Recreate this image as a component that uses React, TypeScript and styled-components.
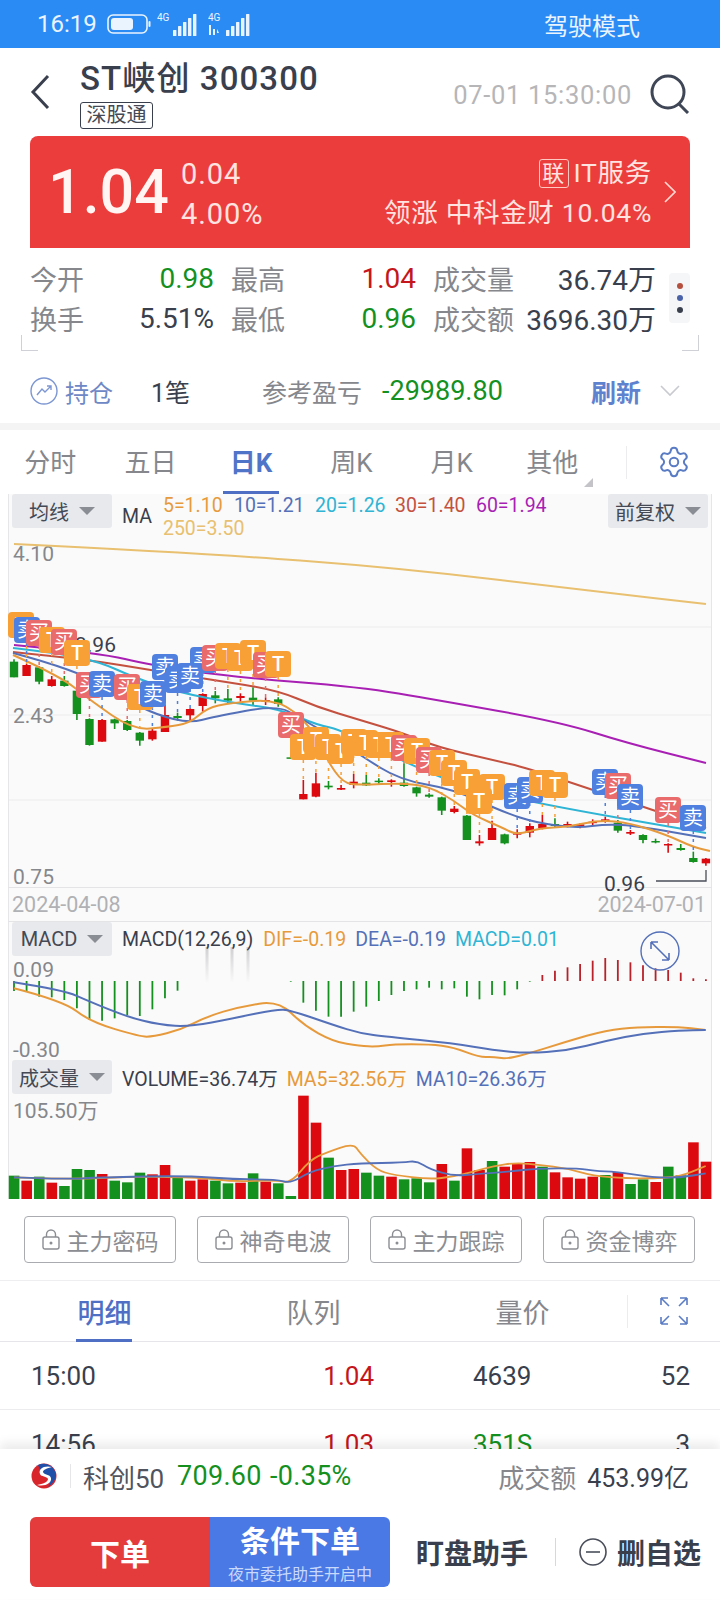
import React from "react"
import styled, { createGlobalStyle } from "styled-components"
import { Settings } from "lucide-react"

const GlobalStyle = createGlobalStyle`
  html, body {
    margin: 0;
    padding: 0;
    background: #fff;
  }
  body {
    font-family: Roboto, "Noto Sans CJK SC", sans-serif;
  }
  * { box-sizing: border-box; }
`

const GREEN = "#14901f"
const RED = "#dc0a0f"
const ORANGE = "#e79a3c"
const BLUE = "#5470b8"
const CYAN = "#2eb4d4"
const BROWN = "#c4513f"
const PURPLE = "#a81fb4"
const GOLD = "#e8c070"

const Page = styled.div`
  width: 720px;
  height: 1600px;
  overflow: hidden;
  position: relative;
  background: #fff;
`

/* status bar */
const StatusBar = styled.div`
  height: 48px;
  background: #2a8bf5;
  color: #eaf4ff;
  display: flex;
  align-items: center;
  gap: 6px;
  padding: 0 80px 0 37px;
  font-size: 24px;
`
const StatusTime = styled.span`
  width: 64px;
`
const DriveMode = styled.span`
  margin-left: auto;
  font-size: 24px;
`

/* header */
const Header = styled.div`
  height: 88px;
  display: flex;
  align-items: center;
  padding: 0 30px;
`
const TitleCol = styled.div`
  margin-left: 30px;
  display: flex;
  flex-direction: column;
  align-items: flex-start;
  margin-top: 6px;
`
const Title = styled.div`
  font-size: 33px;
  font-weight: 500;
  line-height: 34px;
  letter-spacing: 1.1px;
  color: #3a3f4d;
`
const MarketTag = styled.div`
  margin-top: 6px;
  width: 73px;
  height: 27px;
  border: 1px solid #3a3f4d;
  border-radius: 3px;
  font-size: 20px;
  line-height: 25px;
  text-align: center;
  color: #444955;
`
const QuoteTime = styled.div`
  margin-left: auto;
  font-size: 25.5px;
  letter-spacing: 0.7px;
  color: #b6b6b8;
  margin-top: 5px;
`
const SearchBtn = styled.svg`
  margin-left: 18px;
  margin-top: 4px;
`

/* red price card */
const PriceCard = styled.div`
  margin: 0 30px;
  height: 112px;
  background: #ec3d3d;
  border-radius: 8px 8px 0 0;
  display: flex;
  align-items: center;
  padding: 0 14px 0 18px;
  color: #ffe3e0;
`
const BigPrice = styled.div`
  font-size: 61px;
  font-weight: 500;
  color: #fff5f2;
  width: 133px;
`
const ChangeCol = styled.div`
  font-size: 29px;
  line-height: 40px;
  letter-spacing: 0.9px;
  padding-top: 3px;
`
const SectorCol = styled.div`
  margin-left: auto;
  display: flex;
  flex-direction: column;
  align-items: flex-end;
  font-size: 26.5px;
  line-height: 40px;
  letter-spacing: 0.7px;
  padding-top: 2px;
`
const SectorTop = styled.div`
  display: flex;
  align-items: center;
  gap: 5px;
`
const LinkBadge = styled.span`
  width: 30px;
  height: 29px;
  border: 1px solid #ffc8c0;
  border-radius: 3px;
  font-size: 22px;
  line-height: 27px;
  text-align: center;
`
const CardArrow = styled.svg`
  margin-left: 12px;
`

/* stats */
const Stats = styled.div`
  position: relative;
  height: 105px;
  padding: 10px 0 0 30px;
  display: grid;
  grid-template-columns: 184px 185px 223px;
  grid-auto-rows: 40px;
  column-gap: 17px;
`
const StatCell = styled.div`
  display: flex;
  justify-content: space-between;
  align-items: center;
  font-size: 28px;
`
const StatLabel = styled.span`
  color: #85878c;
  font-size: 27px;
`
const StatValue = styled.span<{ $color?: string }>`
  color: ${p => p.$color || "#3a3f4d"};
`
const DotsChip = styled.div`
  position: absolute;
  right: 30px;
  top: 25px;
  width: 21px;
  height: 50px;
  background: #f5f6f8;
  border-radius: 4px;
  display: flex;
  flex-direction: column;
  align-items: center;
  justify-content: center;
  gap: 6px;
`
const Dot = styled.i<{ $color: string }>`
  width: 6px;
  height: 6px;
  border-radius: 50%;
  background: ${p => p.$color};
`
const Corner = styled.div<{ $right?: boolean }>`
  position: absolute;
  bottom: 2px;
  ${p => (p.$right ? "right: 21px;" : "left: 21px;")}
  width: 17px;
  height: 16px;
  border-bottom: 1px solid #cfd1d6;
  ${p => (p.$right ? "border-right" : "border-left")}: 1px solid #cfd1d6;
`

/* holdings row */
const HoldRow = styled.div`
  height: 70px;
  padding: 6px 40px 0 30px;
  display: flex;
  align-items: center;
`
const HoldLabel = styled.span`
  margin-left: 7px;
  width: 86px;
  font-size: 24px;
  color: #6e88c6;
`
const HoldCount = styled.span`
  width: 111px;
  font-size: 25px;
  color: #3a3f4d;
`
const RefLabel = styled.span`
  width: 120px;
  font-size: 25px;
  color: #85878c;
`
const RefValue = styled.span`
  font-size: 27px;
  color: ${GREEN};
`
const RefreshBtn = styled.span`
  margin-left: auto;
  font-size: 25px;
  font-weight: 700;
  color: #5f82cf;
`
const HoldArrow = styled.svg`
  margin-left: 19px;
`

const Band = styled.div`
  height: 7px;
  background: #f4f4f5;
`

/* period tabs */
const PeriodTabs = styled.div`
  height: 64px;
  display: flex;
  align-items: stretch;
`
const PeriodTab = styled.div<{ $active?: boolean }>`
  width: 100.4px;
  position: relative;
  display: flex;
  align-items: center;
  justify-content: center;
  padding-bottom: 4px;
  font-size: 26px;
  font-weight: ${p => (p.$active ? 700 : 400)};
  color: ${p => (p.$active ? "#4f74c8" : "#85878c")};
  ${p =>
    p.$active &&
    `&::after {
      content: "";
      position: absolute;
      bottom: 0;
      left: 22px;
      width: 56px;
      height: 3px;
      background: #4f6fc4;
    }`}
`
const MoreMark = styled.i`
  position: absolute;
  left: 82px;
  top: 48px;
  width: 0;
  height: 0;
  border-left: 9px solid transparent;
  border-bottom: 9px solid #c4c4c8;
`
const TabDivider = styled.div<{ $left?: number }>`
  width: 1px;
  height: 33px;
  align-self: center;
  background: #ececee;
  margin-left: ${p => p.$left ?? 0}px;
`
const TabIcon = styled.div`
  flex: 1;
  display: flex;
  align-items: center;
  justify-content: center;
  color: #5a7cc4;
`

/* chart panels */
const Panel = styled.div<{ $h: number; $top?: boolean }>`
  position: relative;
  z-index: ${p => (p.$top ? 1 : 0)};
  margin: 0 8px;
  height: ${p => p.$h}px;
  background: #fafafa;
  box-shadow: inset 1px 0 #e6e6e8, inset -1px 0 #e6e6e8;
`
const PanelSvg = styled.svg`
  position: absolute;
  left: 0;
  top: 0;
  display: block;
  overflow: visible;
`
const Legend = styled.div`
  position: relative;
  display: flex;
  align-items: center;
  padding-left: 4px;
  font-size: 19.5px;
  height: 34px;
`
const Chip = styled.div`
  width: 100px;
  height: 34px;
  background: #e8e9ec;
  border-radius: 3px;
  display: flex;
  align-items: center;
  justify-content: center;
  gap: 10px;
  font-size: 20px;
  color: #444955;
  flex: none;
`
const ChipArrow = styled.i`
  width: 0;
  height: 0;
  border-left: 8px solid transparent;
  border-right: 8px solid transparent;
  border-top: 8px solid #8b8d94;
`
const LegendText = styled.span<{ $color?: string; $left?: number }>`
  color: ${p => p.$color || "#3a3f4d"};
  margin-left: ${p => p.$left ?? 10}px;
  white-space: nowrap;
`
const MaLabel = styled(LegendText)`
  align-self: flex-end;
  line-height: 22px;
`
const MaLegend = styled.div`
  display: grid;
  grid-template-columns: 71px 81px 80px 81px 80px;
  margin-left: 11px;
  font-size: 19.5px;
  line-height: 23px;
  align-self: flex-start;
`
const MaValue = styled.span<{ $color: string }>`
  color: ${p => p.$color};
  white-space: nowrap;
`
const RightChip = styled(Chip)`
  margin-left: auto;
  margin-right: 4px;
`
const DateRow = styled(Panel)`
  display: flex;
  justify-content: space-between;
  align-items: center;
  padding: 0 6px 0 4px;
  font-size: 21.5px;
  color: #b0b1b5;
  border-top: 1px solid #e4e4e6;
  border-bottom: 1px solid #e4e4e6;
`

/* feature buttons */
const LockRow = styled.div`
  height: 82px;
  padding: 17px 24px 0;
  display: flex;
  gap: 21px;
  border-bottom: 1px solid #eeeef0;
`
const LockBtn = styled.div`
  width: 152px;
  height: 47px;
  border: 1px solid #a9abb0;
  border-radius: 4px;
  display: flex;
  align-items: center;
  justify-content: center;
  gap: 7px;
  font-size: 23px;
  color: #8b8d92;
`

/* detail tabs */
const DetailTabs = styled.div`
  height: 61px;
  display: flex;
  border-bottom: 1px solid #e6e6ea;
`
const DetailTab = styled.div<{ $active?: boolean }>`
  width: 209px;
  position: relative;
  display: flex;
  align-items: center;
  justify-content: center;
  font-size: 27px;
  font-weight: ${p => (p.$active ? 500 : 400)};
  color: ${p => (p.$active ? "#4f6fc4" : "#85878c")};
  ${p =>
    p.$active &&
    `&::after {
      content: "";
      position: absolute;
      bottom: -1px;
      left: 76px;
      width: 56px;
      height: 3px;
      background: #4f6fc4;
    }`}
`

/* trade list */
const TradeList = styled.div`
  height: 107px;
  overflow: hidden;
`
const TradeRow = styled.div`
  height: 68px;
  padding: 0 30px 0 31px;
  display: grid;
  grid-template-columns: 120px 223px 199px 1fr;
  align-items: center;
  font-size: 26px;
  color: #3a3f4d;
  border-bottom: 1px solid #ececee;
`
const TradePrice = styled.span`
  text-align: right;
  color: #c4161c;
`
const TradeVol = styled.span<{ $color?: string }>`
  padding-left: 99px;
  color: ${p => p.$color || "#3a3f4d"};
`
const TradeCount = styled.span`
  text-align: right;
`

/* bottom bar */
const BottomBar = styled.div`
  position: relative;
  height: 150px;
  background: #fff;
  box-shadow: 0 -6px 10px rgba(0, 0, 0, 0.08);
`
const TickerRow = styled.div`
  height: 54px;
  padding: 0 31px 0 30px;
  display: flex;
  align-items: center;
  font-size: 25px;
`
const TickerDivider = styled.div`
  width: 1px;
  height: 24px;
  background: #e6e6e8;
  margin: 0 12px;
`
const TickerName = styled.span`
  color: #50545e;
  width: 94px;
  font-size: 26px;
`
const TickerNum = styled.span<{ $w?: number }>`
  color: ${GREEN};
  font-size: 27px;
  letter-spacing: 0.3px;
  width: ${p => p.$w}px;
`
const TurnoverLabel = styled.span`
  margin-left: auto;
  font-size: 26px;
  color: #85878c;
  margin-right: 11px;
`
const TurnoverValue = styled.span`
  color: #3a3f4d;
`
const ActionRow = styled.div`
  margin-top: 14px;
  padding-left: 30px;
  display: flex;
  align-items: center;
  white-space: nowrap;
`
const OrderBtn = styled.div`
  width: 180px;
  height: 70px;
  background: #e43c3c;
  border-radius: 6px 0 0 6px;
  color: #fff;
  font-size: 30px;
  font-weight: 700;
  display: flex;
  align-items: center;
  justify-content: center;
`
const CondBtn = styled.div`
  width: 180px;
  height: 70px;
  padding-top: 4px;
  background: #4a78e4;
  border-radius: 0 6px 6px 0;
  color: #fff;
  display: flex;
  flex-direction: column;
  align-items: center;
  justify-content: center;
`
const CondTitle = styled.div`
  font-size: 30px;
  font-weight: 700;
  line-height: 38px;
`
const CondSub = styled.div`
  margin-top: 3px;
  font-size: 16px;
  line-height: 22px;
  color: #c9d9fb;
`
const ActionText = styled.span<{ $left?: number }>`
  margin-left: ${p => p.$left ?? 0}px;
  font-size: 28px;
  font-weight: 700;
  color: #3a3f4d;
`
const ActionDivider = styled.div`
  width: 1px;
  height: 28px;
  background: #d8d8dc;
  margin: 0 23px 0 27px;
`
const MinusIcon = styled.svg`
  margin-right: 10px;
`

/* chart data, in page pixels */
type Pt = [number, number]
const xAt = (i: number) => 14 + i * 12.58

const smooth = (pts: Pt[]) => {
  let d = `M${pts[0][0]} ${pts[0][1]}`
  for (let i = 1; i < pts.length - 1; i++) {
    const mx = (pts[i][0] + pts[i + 1][0]) / 2
    const my = (pts[i][1] + pts[i + 1][1]) / 2
    d += ` Q${pts[i][0]} ${pts[i][1]} ${mx} ${my}`
  }
  const last = pts[pts.length - 1]
  return d + ` L${last[0]} ${last[1]}`
}

// [colour, wick top, body top, body bottom, wick bottom], read off at 3x
type C = ["g" | "r", number, number, number, number]
const candlesA: C[] = [
  ["g", 208, 215, 262, 262], ["r", 222, 225, 258, 258], ["g", 228, 232, 275, 283], ["r", 258, 268, 288, 290],
  ["g", 258, 272, 288, 290], ["g", 298, 302, 372, 390], ["g", 385, 387, 465, 467], ["r", 387, 390, 455, 455],
  ["g", 386, 388, 400, 417], ["g", 390, 393, 420, 423], ["g", 426, 428, 452, 467], ["r", 415, 422, 448, 452],
  ["r", 345, 375, 426, 426], ["g", 368, 378, 384, 392], ["r", 355, 357, 376, 395], ["r", 310, 312, 348, 365],
  ["g", 303, 316, 325, 340], ["g", 297, 325, 332, 340], ["r", 310, 318, 324, 335], ["g", 292, 323, 332, 345],
  ["r", 322, 330, 335, 345], ["g", 322, 328, 342, 350], ["g", 500, 502, 506, 506], ["r", 570, 612, 628, 628],
  ["r", 548, 580, 620, 622], ["g", 573, 587, 592, 598], ["r", 585, 594, 599, 600], ["r", 552, 575, 585, 595],
]
const candlesB: C[] = [
  ["g", 225, 248, 256, 258], ["g", 235, 242, 246, 255], ["r", 238, 241, 246, 260], ["g", 190, 248, 258, 260],
  ["g", 260, 262, 280, 290], ["g", 280, 284, 290, 293], ["g", 290, 292, 332, 345], ["r", 318, 326, 336, 340],
  ["g", 345, 347, 420, 420], ["r", 405, 424, 430, 437], ["r", 362, 384, 420, 420], ["g", 401, 403, 430, 433],
  ["r", 388, 398, 404, 415], ["r", 370, 378, 398, 412], ["r", 345, 372, 385, 388], ["g", 355, 372, 378, 382],
  ["r", 365, 372, 376, 382], ["r", 370, 373, 378, 385], ["r", 358, 365, 369, 375], ["r", 350, 358, 363, 368],
  ["g", 360, 368, 392, 398], ["r", 390, 396, 401, 405], ["g", 403, 405, 420, 430], ["g", 416, 423, 427, 430],
  ["r", 430, 432, 435, 458], ["g", 432, 444, 450, 452], ["g", 455, 474, 486, 488], ["r", 474, 476, 490, 497],
]
const toPage = (base: number) => (c: C): C => [c[0], base + c[1] / 3, base + c[2] / 3, base + c[3] / 3, base + c[4] / 3]
const candles: C[] = [...candlesA.map(toPage(590)), ...candlesB.map(toPage(700))]

const maLines: { color: string; pts: Pt[] }[] = [
  { color: GOLD, pts: [[14, 544], [200, 553], [400, 568], [600, 592], [706, 604]] },
  { color: PURPLE, pts: [[14, 645], [100, 653], [150, 665], [233, 677], [360, 687], [437, 700], [560, 722], [627, 743], [706, 763]] },
  { color: BROWN, pts: [[13, 652], [90, 660], [150, 670], [213, 680], [277, 690], [317, 707], [360, 720], [403, 733], [437, 747], [493, 760], [527, 768], [593, 790], [653, 810], [706, 828]] },
  { color: CYAN, pts: [[13, 648], [57, 653], [100, 662], [133, 677], [177, 692], [233, 703], [280, 709], [317, 725], [343, 730], [440, 780], [533, 803], [706, 833]] },
  { color: BLUE, pts: [[13, 653], [77, 670], [127, 700], [157, 715], [190, 723], [213, 717], [277, 705], [300, 718], [333, 737], [360, 755], [400, 780], [453, 789], [503, 812], [537, 823], [577, 828], [607, 824], [637, 826], [706, 838]] },
  { color: ORANGE, pts: [[13, 655], [60, 676], [90, 700], [133, 730], [167, 727], [190, 723], [207, 708], [230, 703], [278, 699], [310, 725], [327, 760], [343, 783], [360, 785], [403, 783], [430, 787], [453, 800], [473, 815], [503, 828], [517, 835], [540, 828], [567, 827], [600, 820], [630, 823], [667, 835], [693, 847], [710, 851]] },
]

type Kind = "T" | "买" | "卖"
const markerFill: Record<Kind, string> = { T: "#f8a036", 买: "#e96b6b", 卖: "#4f80e0" }
const markers: [Kind, number, number][] = [
  ["T", 21, 625], ["卖", 27, 630], ["买", 39, 633], ["T", 52, 640], ["买", 64, 642], ["T", 77, 653],
  ["买", 89, 685], ["卖", 102, 684], ["买", 127, 687], ["T", 140, 697], ["卖", 153, 694], ["卖", 165, 667],
  ["卖", 178, 680], ["卖", 203, 660], ["卖", 190, 676], ["买", 215, 658], ["T", 228, 656], ["T", 240, 658],
  ["T", 253, 653], ["买", 266, 665], ["T", 278, 664], ["买", 291, 725], ["T", 303, 747], ["T", 316, 740],
  ["T", 328, 747], ["T", 341, 751], ["T", 354, 742], ["T", 365, 743], ["T", 379, 745], ["T", 391, 745],
  ["买", 404, 748], ["T", 417, 751], ["买", 429, 760], ["T", 442, 763], ["T", 454, 773], ["T", 467, 782],
  ["T", 492, 787], ["T", 479, 801], ["卖", 517, 796], ["卖", 530, 790], ["T", 542, 783], ["T", 555, 785],
  ["卖", 605, 782], ["买", 618, 786], ["卖", 630, 797], ["买", 668, 810], ["卖", 693, 818],
]

const macdBars: number[] = [
  213, 215, 230, 232, 240, 265, 300, 302, 295, 285, 288, 268, 235, 212,
  0, 0, 0, 0, 0, 0, 0, 0, 185, 248, 272, 290, 290, 275,
  260, 243, 225, 213, 208, 203, 208, 205, 230, 238, 225, 226, 208, 185,
  165, 152, 142, 132, 122, 114, 120, 127, 136, 145, 150, 158, 175, 178,
]
const macdLine = (pts: Pt[]): Pt[] => pts.map(([x, y]) => [x / 3, 920 + y / 3])
const macdRight = (pts: Pt[]): Pt[] => pts.map(([x, y]) => [360 + x / 3, 920 + y / 3])
const dea = [
  ...macdLine([[42, 187], [190, 210], [270, 245], [380, 290], [480, 315], [570, 320], [700, 295], [830, 268], [870, 270], [1000, 315], [1080, 340]]),
  ...macdRight([[80, 350], [280, 370], [400, 390], [500, 400], [620, 392], [740, 362], [850, 340], [960, 332], [1037, 330]]),
]
const dif = [
  ...macdLine([[42, 205], [190, 243], [270, 305], [420, 350], [460, 350], [540, 330], [620, 290], [720, 260], [835, 242], [910, 315], [1000, 365], [1080, 378]]),
  ...macdRight([[50, 380], [100, 373], [210, 373], [280, 382], [360, 412], [400, 410], [435, 417], [490, 405], [620, 365], [740, 330], [830, 322], [950, 320], [1037, 330]]),
]

const volTops: number[] = [
  767, 782, 770, 788, 798, 747, 750, 762, 782, 787, 758, 763, 735, 773, 782, 778, 782, 790, 788, 760, 785, 790, 828, 527, 608, 713, 750, 747,
  758, 767, 770, 778, 775, 787, 732, 782, 685, 750, 723, 740, 730, 726, 740, 757, 772, 776, 770, 765, 756, 792, 778, 786, 740, 766, 667, 725,
]
const volColors = "grgrgggrgggrrgrrggrgrggrrgrr" + "ggrgggrgrrgrrrgrrrrgrggrggr"
const volMa5 = [
  ...macdLine([[42, 772], [200, 778], [400, 770], [600, 772], [700, 785], [830, 780], [872, 790], [930, 720], [980, 697], [1060, 670], [1080, 700]]),
  ...macdRight([[50, 750], [100, 765], [210, 778], [280, 770], [340, 755], [400, 738], [470, 728], [540, 735], [620, 745], [700, 768], [800, 775], [880, 775], [960, 770], [1037, 738]]),
]
const volMa10 = [
  ...macdLine([[42, 772], [200, 778], [300, 772], [560, 767], [700, 778], [830, 778], [872, 790], [930, 755], [1000, 738], [1080, 730]]),
  ...macdRight([[130, 728], [170, 722], [210, 748], [280, 768], [350, 762], [450, 755], [530, 745], [660, 745], [700, 753], [770, 755], [880, 773], [960, 773], [1037, 760]]),
]

const AxisText: React.FC<{ x: number; y: number; color?: string; children: React.ReactNode }> = ({ x, y, color = "#85878c", children }) => (
  <text x={x} y={y} fontSize={21} fill={color} fontFamily='Roboto, "Noto Sans CJK SC", sans-serif'>
    {children}
  </text>
)

const MainChart = () => (
  <PanelSvg width={704} height={393} viewBox="8 494 704 393">
    {[627, 715, 800].map(y => <line key={y} x1={9} x2={711} y1={y} y2={y} stroke="#ececee" />)}
    <AxisText x={13} y={561}>4.10</AxisText>
    <AxisText x={13} y={723}>2.43</AxisText>
    <AxisText x={13} y={884}>0.75</AxisText>
    <AxisText x={75} y={652} color="#3a3f4d">3.96</AxisText>
    <AxisText x={604} y={891} color="#3a3f4d">0.96</AxisText>
    <path d="M656 881 H706 V870" fill="none" stroke="#4a4e5a" strokeWidth={1.3} />
    {candles.map((c, i) => {
      const color = c[0] === "g" ? GREEN : RED
      const x = xAt(i)
      return (
        <g key={i}>
          <line x1={x} x2={x} y1={c[1]} y2={c[4]} stroke={color} strokeWidth={1.6} />
          <rect x={x - 4.2} y={c[2]} width={8.4} height={Math.max(c[3] - c[2], 1.5)} fill={color} />
        </g>
      )
    })}
    {maLines.map(l => <path key={l.color} d={smooth(l.pts)} fill="none" stroke={l.color} strokeWidth={2} />)}
    {markers.map(([kind, cx, cy], i) => {
      const idx = Math.max(0, Math.min(55, Math.round((cx - 14) / 12.58)))
      return (
        <line key={i} x1={xAt(idx)} x2={xAt(idx)} y1={cy + 13} y2={candles[idx][1]} stroke={markerFill[kind]} strokeWidth={1.5} strokeDasharray="3 5" />
      )
    })}
    {markers.map(([kind, cx, cy], i) => (
      <g key={i}>
        <rect x={cx - 13} y={cy - 13} width={26} height={26} rx={4} fill={markerFill[kind]} />
        <text x={cx} y={cy + 7} fontSize={20} fill="#fff" textAnchor="middle" fontWeight={kind === "T" ? 500 : 400} fontFamily='Roboto, "Noto Sans CJK SC", sans-serif'>
          {kind}
        </text>
      </g>
    ))}
  </PanelSvg>
)

const MacdChart = () => (
  <PanelSvg width={704} height={138} viewBox="8 922 704 138">
    <defs>
      <linearGradient id="smear" x1="0" y1="0" x2="0" y2="1">
        <stop offset="0" stopColor="#c8c8cc" stopOpacity={0.85} />
        <stop offset="1" stopColor="#c8c8cc" stopOpacity={0} />
      </linearGradient>
    </defs>
    <AxisText x={13} y={977}>0.09</AxisText>
    <AxisText x={13} y={1057}>-0.30</AxisText>
    {[207, 232, 248].map(x => <rect key={x} x={x - 1.5} y={947} width={3} height={36} fill="url(#smear)" />)}
    {macdBars.map((v, i) => {
      if (!v) return null
      const y = 920 + v / 3
      const up = v < 182
      return <line key={i} x1={xAt(i)} x2={xAt(i)} y1={981} y2={y} stroke={up ? "#b8202a" : GREEN} strokeWidth={1.8} />
    })}
    <path d={smooth(dif)} fill="none" stroke={ORANGE} strokeWidth={2} />
    <path d={smooth(dea)} fill="none" stroke={BLUE} strokeWidth={2} />
    <circle cx={660} cy={951} r={19} fill="none" stroke={BLUE} strokeWidth={1.4} />
    <path d="M651 942 L669 960 M651 942 h7 M651 942 v7 M669 960 h-7 M669 960 v-7" fill="none" stroke={BLUE} strokeWidth={1.6} />
  </PanelSvg>
)

const VolumeChart = () => (
  <PanelSvg width={704} height={139} viewBox="8 1060 704 139">
    <AxisText x={13} y={1118}>105.50万</AxisText>
    {volTops.map((t, i) => {
      const top = 920 + t / 3
      return <rect key={i} x={xAt(i) - 5.2} y={top} width={10.6} height={1199 - top} fill={volColors[i] === "g" ? GREEN : RED} />
    })}
    <path d={smooth(volMa5)} fill="none" stroke={ORANGE} strokeWidth={1.8} />
    <path d={smooth(volMa10)} fill="none" stroke={BLUE} strokeWidth={1.8} />
  </PanelSvg>
)

const LockIcon = () => (
  <svg width={18} height={21} viewBox="0 0 18 21" fill="none" stroke="#8b8d92" strokeWidth={1.4}>
    <rect x={1} y={8} width={16} height={12} rx={2} />
    <path d="M4.5 8 V5.5 a4.5 4.5 0 0 1 9 0 V8" />
    <circle cx={9} cy={14} r={0.8} fill="#8b8d92" />
  </svg>
)

const SignalBars: React.FC<{ wide?: boolean }> = ({ wide }) => (
  <svg width={44} height={24} viewBox="0 0 44 24" fill="#eaf4ff">
    <text x={wide ? 1 : 0} y={9} fontSize={10} fontFamily="Roboto, sans-serif">4G</text>
    {wide && <path d="M2 13 h2 v10 h-2z M6 17 h2 v6 h-2z M10 17 l2 4 h-2z" />}
    {[0, 1, 2, 3, 4].map(i => (
      <rect key={i} x={(wide ? 19 : 16) + i * 5} y={18 - i * 4} width={3.4} height={6 + i * 4} rx={0.5} />
    ))}
  </svg>
)

const App: React.FC = () => {
  return (
    <Page>
      <GlobalStyle />
      <StatusBar>
        <StatusTime>16:19</StatusTime>
        <svg width={44} height={20} viewBox="0 0 44 20" fill="none">
          <rect x={1} y={1} width={39} height={18} rx={5} stroke="#eaf4ff" strokeWidth={1.6} />
          <rect x={4} y={4} width={22} height={12} rx={3} fill="#eaf4ff" />
          <rect x={41.5} y={7} width={2} height={6} rx={1} fill="#eaf4ff" />
        </svg>
        <SignalBars />
        <SignalBars wide />
        <DriveMode>驾驶模式</DriveMode>
      </StatusBar>

      <Header>
        <svg width={20} height={36} viewBox="0 0 20 36" fill="none" stroke="#3a3f4d" strokeWidth={3}>
          <path d="M18 2 L3 18 L18 34" />
        </svg>
        <TitleCol>
          <Title>ST峡创 300300</Title>
          <MarketTag>深股通</MarketTag>
        </TitleCol>
        <QuoteTime>07-01 15:30:00</QuoteTime>
        <SearchBtn width={40} height={40} viewBox="0 0 40 40" fill="none" stroke="#3f4656" strokeWidth={3}>
          <circle cx={18} cy={18} r={16} />
          <path d="M29 30 L38 39" />
        </SearchBtn>
      </Header>

      <PriceCard>
        <BigPrice>1.04</BigPrice>
        <ChangeCol>
          <div>0.04</div>
          <div>4.00%</div>
        </ChangeCol>
        <SectorCol>
          <SectorTop>
            <LinkBadge>联</LinkBadge>
            <span>IT服务</span>
          </SectorTop>
          <div>领涨 中科金财 10.04%</div>
        </SectorCol>
        <CardArrow width={12} height={22} viewBox="0 0 12 22" fill="none" stroke="#ffd8d2" strokeWidth={1.6}>
          <path d="M1 1 L11 11 L1 21" />
        </CardArrow>
      </PriceCard>

      <Stats>
        <StatCell><StatLabel>今开</StatLabel><StatValue $color={GREEN}>0.98</StatValue></StatCell>
        <StatCell><StatLabel>最高</StatLabel><StatValue $color="#c4161c">1.04</StatValue></StatCell>
        <StatCell><StatLabel>成交量</StatLabel><StatValue>36.74万</StatValue></StatCell>
        <StatCell><StatLabel>换手</StatLabel><StatValue>5.51%</StatValue></StatCell>
        <StatCell><StatLabel>最低</StatLabel><StatValue $color={GREEN}>0.96</StatValue></StatCell>
        <StatCell><StatLabel>成交额</StatLabel><StatValue>3696.30万</StatValue></StatCell>
        <DotsChip>
          <Dot $color="#b5503f" />
          <Dot $color="#4a62a8" />
          <Dot $color="#3a3f4d" />
        </DotsChip>
        <Corner />
        <Corner $right />
      </Stats>

      <HoldRow>
        <svg width={28} height={28} viewBox="0 0 28 28" fill="none" stroke="#7d97d2" strokeWidth={1.4}>
          <circle cx={14} cy={14} r={13} />
          <path d="M7 18 L12 12 L15 15 L21 9 M17 9 h4 v4" />
        </svg>
        <HoldLabel>持仓</HoldLabel>
        <HoldCount>1笔</HoldCount>
        <RefLabel>参考盈亏</RefLabel>
        <RefValue>-29989.80</RefValue>
        <RefreshBtn>刷新</RefreshBtn>
        <HoldArrow width={20} height={12} viewBox="0 0 20 12" fill="none" stroke="#c9cad0" strokeWidth={1.6}>
          <path d="M1 1 L10 10 L19 1" />
        </HoldArrow>
      </HoldRow>

      <Band />

      <PeriodTabs>
        <PeriodTab>分时</PeriodTab>
        <PeriodTab>五日</PeriodTab>
        <PeriodTab $active>日K</PeriodTab>
        <PeriodTab>周K</PeriodTab>
        <PeriodTab>月K</PeriodTab>
        <PeriodTab>其他<MoreMark /></PeriodTab>
        <TabDivider $left={24} />
        <TabIcon><Settings size={34} strokeWidth={1.4} /></TabIcon>
      </PeriodTabs>

      <Panel $h={393} $top>
        <MainChart />
        <Legend>
          <Chip>均线<ChipArrow /></Chip>
          <MaLabel>MA</MaLabel>
          <MaLegend>
            <MaValue $color={ORANGE}>5=1.10</MaValue>
            <MaValue $color={BLUE}>10=1.21</MaValue>
            <MaValue $color={CYAN}>20=1.26</MaValue>
            <MaValue $color={BROWN}>30=1.40</MaValue>
            <MaValue $color={PURPLE}>60=1.94</MaValue>
            <MaValue $color={GOLD}>250=3.50</MaValue>
          </MaLegend>
          <RightChip>前复权<ChipArrow /></RightChip>
        </Legend>
      </Panel>
      <DateRow $h={35}>
        <span>2024-04-08</span>
        <span>2024-07-01</span>
      </DateRow>
      <Panel $h={138}>
        <MacdChart />
        <Legend>
          <Chip>MACD<ChipArrow /></Chip>
          <LegendText>MACD(12,26,9)</LegendText>
          <LegendText $color={ORANGE} $left={10}>DIF=-0.19</LegendText>
          <LegendText $color={BLUE} $left={9}>DEA=-0.19</LegendText>
          <LegendText $color={CYAN} $left={9}>MACD=0.01</LegendText>
        </Legend>
      </Panel>
      <Panel $h={139}>
        <VolumeChart />
        <Legend>
          <Chip>成交量<ChipArrow /></Chip>
          <LegendText>VOLUME=36.74万</LegendText>
          <LegendText $color={ORANGE} $left={9}>MA5=32.56万</LegendText>
          <LegendText $color={BLUE} $left={9}>MA10=26.36万</LegendText>
        </Legend>
      </Panel>

      <LockRow>
        {["主力密码", "神奇电波", "主力跟踪", "资金博弈"].map(name => (
          <LockBtn key={name}><LockIcon />{name}</LockBtn>
        ))}
      </LockRow>

      <DetailTabs>
        <DetailTab $active>明细</DetailTab>
        <DetailTab>队列</DetailTab>
        <DetailTab>量价</DetailTab>
        <TabDivider />
        <TabIcon>
          <svg width={28} height={28} viewBox="0 0 28 28" fill="none" stroke="#5a7cc4" strokeWidth={1.6}>
            <path d="M1 1 L9 9 M1 1 h7 M1 1 v7 M27 1 L19 9 M27 1 h-7 M27 1 v7 M1 27 L9 19 M1 27 h7 M1 27 v-7 M27 27 L19 19 M27 27 h-7 M27 27 v-7" />
          </svg>
        </TabIcon>
      </DetailTabs>

      <TradeList>
        <TradeRow>
          <span>15:00</span>
          <TradePrice>1.04</TradePrice>
          <TradeVol>4639</TradeVol>
          <TradeCount>52</TradeCount>
        </TradeRow>
        <TradeRow>
          <span>14:56</span>
          <TradePrice>1.03</TradePrice>
          <TradeVol $color={GREEN}>351S</TradeVol>
          <TradeCount>3</TradeCount>
        </TradeRow>
      </TradeList>

      <BottomBar>
        <TickerRow>
          <svg width={28} height={26} viewBox="0 0 28 26">
            <circle cx={14} cy={13} r={12.5} fill="#d8252b" />
            <path d="M8 2 A12.5 12.5 0 0 1 26 13 C25 18 22 21 18 24 C22 18 20 13 14 12 C11 10 10 6 8 2z" fill="#1f4fa8" />
            <path d="M22 4 C14 2 8 6 10 11 C11 14 17 13 18 16 C18 19 13 21 7 22 C15 24 22 20 21 15 C20 11 14 12 13 9 C13 7 17 5 22 4z" fill="#fff" />
          </svg>
          <TickerDivider />
          <TickerName>科创50</TickerName>
          <TickerNum $w={93}>709.60</TickerNum>
          <TickerNum $w={90}>-0.35%</TickerNum>
          <TurnoverLabel>成交额</TurnoverLabel>
          <TurnoverValue>453.99亿</TurnoverValue>
        </TickerRow>
        <ActionRow>
          <OrderBtn>下单</OrderBtn>
          <CondBtn>
            <CondTitle>条件下单</CondTitle>
            <CondSub>夜市委托助手开启中</CondSub>
          </CondBtn>
          <ActionText $left={26}>盯盘助手</ActionText>
          <ActionDivider />
          <MinusIcon width={28} height={28} viewBox="0 0 28 28" fill="none" stroke="#4a4e5a" strokeWidth={1.6}>
            <circle cx={14} cy={14} r={13} />
            <path d="M7 14 H21" />
          </MinusIcon>
          <ActionText>删自选</ActionText>
        </ActionRow>
      </BottomBar>
    </Page>
  )
}

export default App
